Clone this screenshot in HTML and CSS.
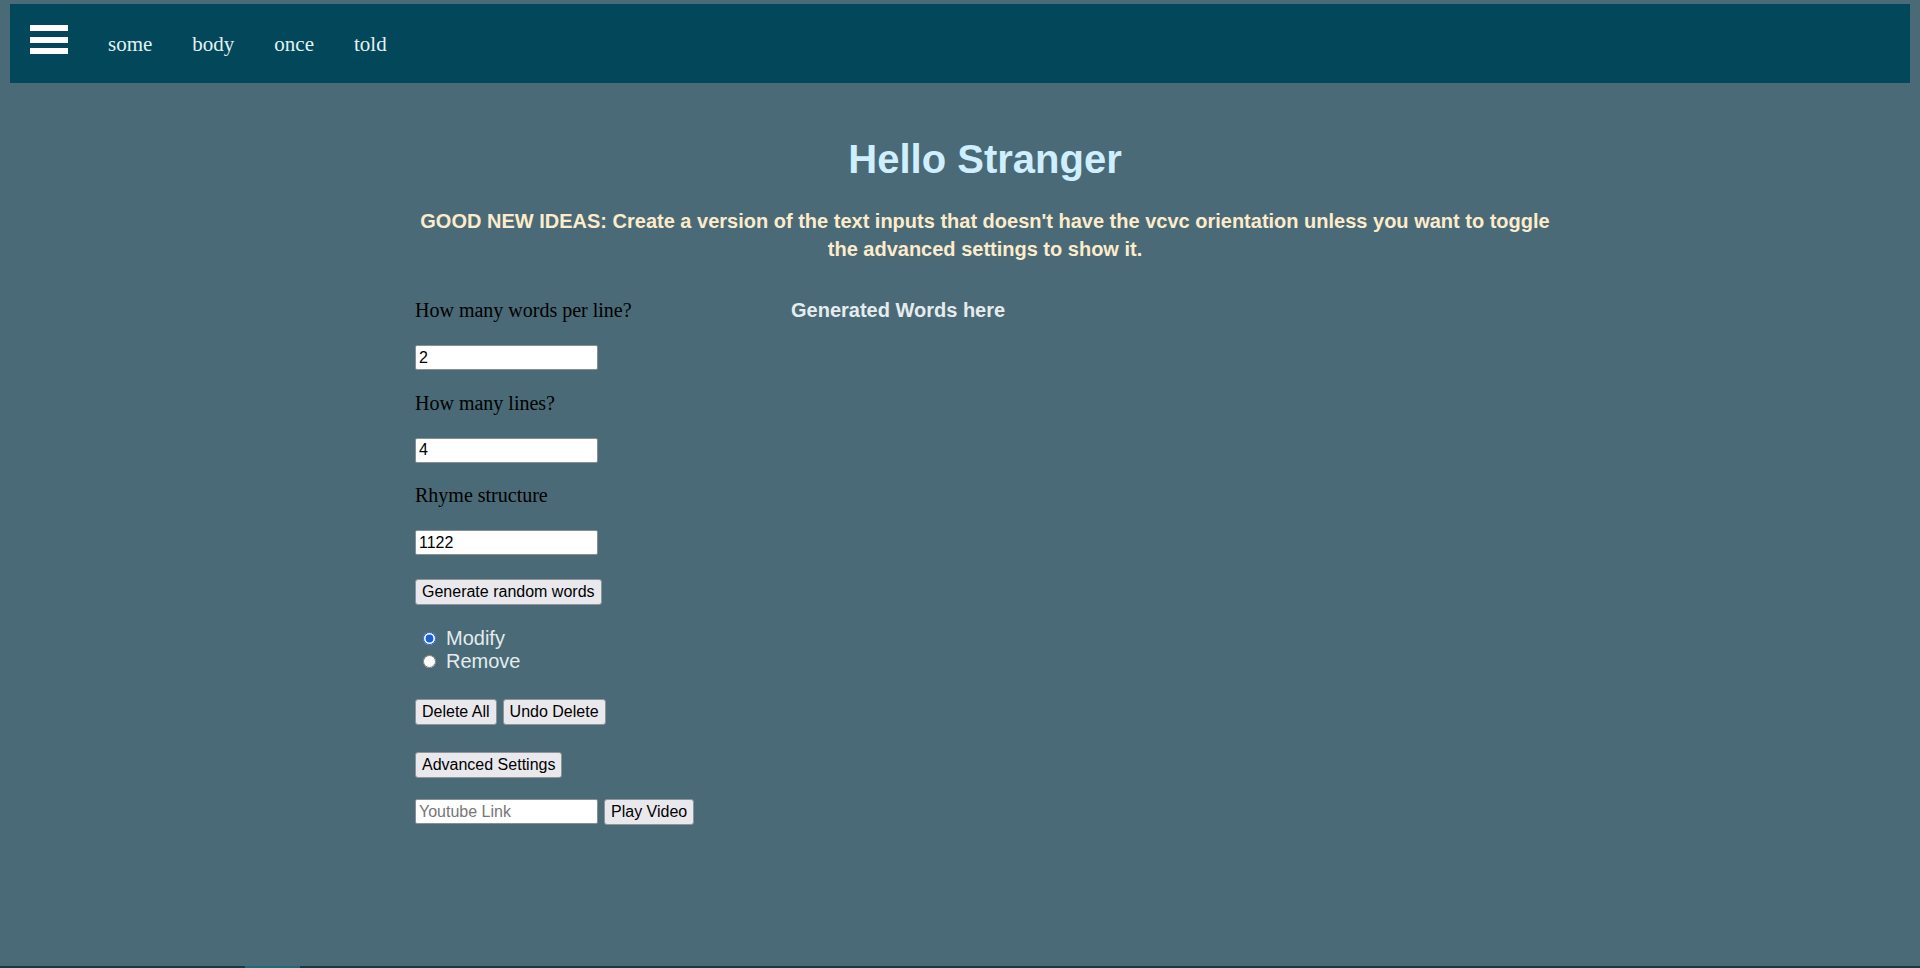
FILE: index.html
```html
<!DOCTYPE html>
<html lang="en">
<head>
<meta charset="utf-8">
<title>Hello Stranger</title>
<link rel="stylesheet" href="styles.css">
</head>
<body>
<nav class="topbar">
  <div class="hamburger"><span></span><span></span><span></span></div>
  <a class="nav-link" href="#">some</a>
  <a class="nav-link" href="#">body</a>
  <a class="nav-link" href="#">once</a>
  <a class="nav-link" href="#">told</a>
</nav>
<main class="page">
  <div class="container">
    <h1 class="title">Hello Stranger</h1>
    <p class="ideas">GOOD NEW IDEAS: Create a version of the text inputs that doesn't have the vcvc orientation unless you want to toggle the advanced settings to show it.</p>
    <div class="columns">
      <div class="controls">
        <p class="label">How many words per line?</p>
        <input class="field gap-s" type="text" value="2">
        <p class="label gap-l">How many lines?</p>
        <input class="field gap-s" type="text" value="4">
        <p class="label gap-l">Rhyme structure</p>
        <input class="field gap-s" type="text" value="1122">
        <div class="gap-b"><button class="btn">Generate random words</button></div>
        <div class="radios">
          <label class="radio"><input type="radio" name="mode" checked>Modify</label>
          <label class="radio"><input type="radio" name="mode">Remove</label>
        </div>
        <div class="row row-delete">
          <button class="btn">Delete All</button>
          <button class="btn">Undo Delete</button>
        </div>
        <div class="row row-adv"><button class="btn">Advanced Settings</button></div>
        <div class="row row-video">
          <input class="field" type="text" placeholder="Youtube Link">
          <button class="btn">Play Video</button>
        </div>
      </div>
      <div class="output">
        <h3 class="output-title">Generated Words here</h3>
      </div>
    </div>
  </div>
</main>
<footer class="footer"><span class="footer-tab"></span></footer>
</body>
</html>
```

FILE: styles.css
```css
html, body {
  margin: 0;
  height: 968px;
  overflow: hidden;
}
body {
  background: #496a76;
  font-family: "Liberation Sans", Arial, sans-serif;
  display: flex;
  flex-direction: column;
}
.topbar {
  margin: 4px 10px 0;
  height: 79px;
  background: #02475a;
  display: flex;
  align-items: flex-start;
  gap: 40px;
  padding-left: 20px;
  flex-shrink: 0;
}
.hamburger {
  margin-top: 21px;
  width: 38px;
  display: flex;
  flex-direction: column;
  gap: 5.5px;
}
.hamburger span {
  display: block;
  height: 6px;
  background: #ffffff;
}
.nav-link {
  margin-top: 27.5px;
  font-family: "Liberation Serif", "Times New Roman", serif;
  font-size: 21px;
  line-height: 24px;
  color: #e2f3f4;
  text-decoration: none;
}
.page {
  height: 883px;
  flex-shrink: 0;
}
.container {
  margin-left: 415px;
  width: 1140px;
}
.title {
  margin: 53px 0 0;
  text-align: center;
  font-size: 40px;
  line-height: 46px;
  font-weight: bold;
  color: #cfeeff;
}
.ideas {
  margin: 25px 0 0;
  text-align: center;
  font-size: 20px;
  line-height: 28px;
  font-weight: bold;
  color: #fdeccc;
}
.columns {
  margin-top: 36px;
  display: grid;
  grid-template-columns: 376px 1fr;
}
.controls {
  display: flex;
  flex-direction: column;
  align-items: flex-start;
}
.label {
  margin: 0;
  font-family: "Liberation Serif", "Times New Roman", serif;
  font-size: 20px;
  line-height: 23px;
  color: #000;
}
.gap-s {
  margin-top: 23px;
}
.gap-l {
  margin-top: 21.5px;
}
.gap-b {
  margin-top: 24px;
}
.field {
  box-sizing: border-box;
  width: 183px;
  height: 25px;
  padding: 1px 3px;
  border: 1px solid #8a8f93;
  border-radius: 2px;
  background: #fff;
  font-family: "Liberation Sans", Arial, sans-serif;
  font-size: 16px;
  color: #000;
}
.field::placeholder {
  color: #777;
}
.btn {
  box-sizing: border-box;
  height: 26px;
  padding: 0 6px;
  border: 1px solid #8f9499;
  border-radius: 3px;
  background: #e9e9ed;
  font-family: "Liberation Sans", Arial, sans-serif;
  font-size: 16px;
  color: #000;
}
.radios {
  margin-top: 21.5px;
  display: flex;
  flex-direction: column;
}
.radio {
  display: flex;
  align-items: center;
  font-size: 20px;
  line-height: 23px;
  color: #e4ecee;
}
.radio input {
  margin: 0 10px 0 8px;
  width: 13px;
  height: 13px;
  accent-color: #1a5fd6;
}
.row {
  display: flex;
  gap: 6px;
}
.row-delete { margin-top: 26.5px; }
.row-adv { margin-top: 26.5px; }
.row-video { margin-top: 21.5px; gap: 6px; }
.output-title {
  margin: 0;
  font-size: 20px;
  line-height: 23px;
  font-weight: bold;
  color: #e6ecee;
}
.footer {
  height: 60px;
  background: #173a42;
  padding-left: 245px;
  flex-shrink: 0;
}
.footer-tab {
  display: block;
  width: 55px;
  height: 4px;
  background: #1b6c75;
}
```
